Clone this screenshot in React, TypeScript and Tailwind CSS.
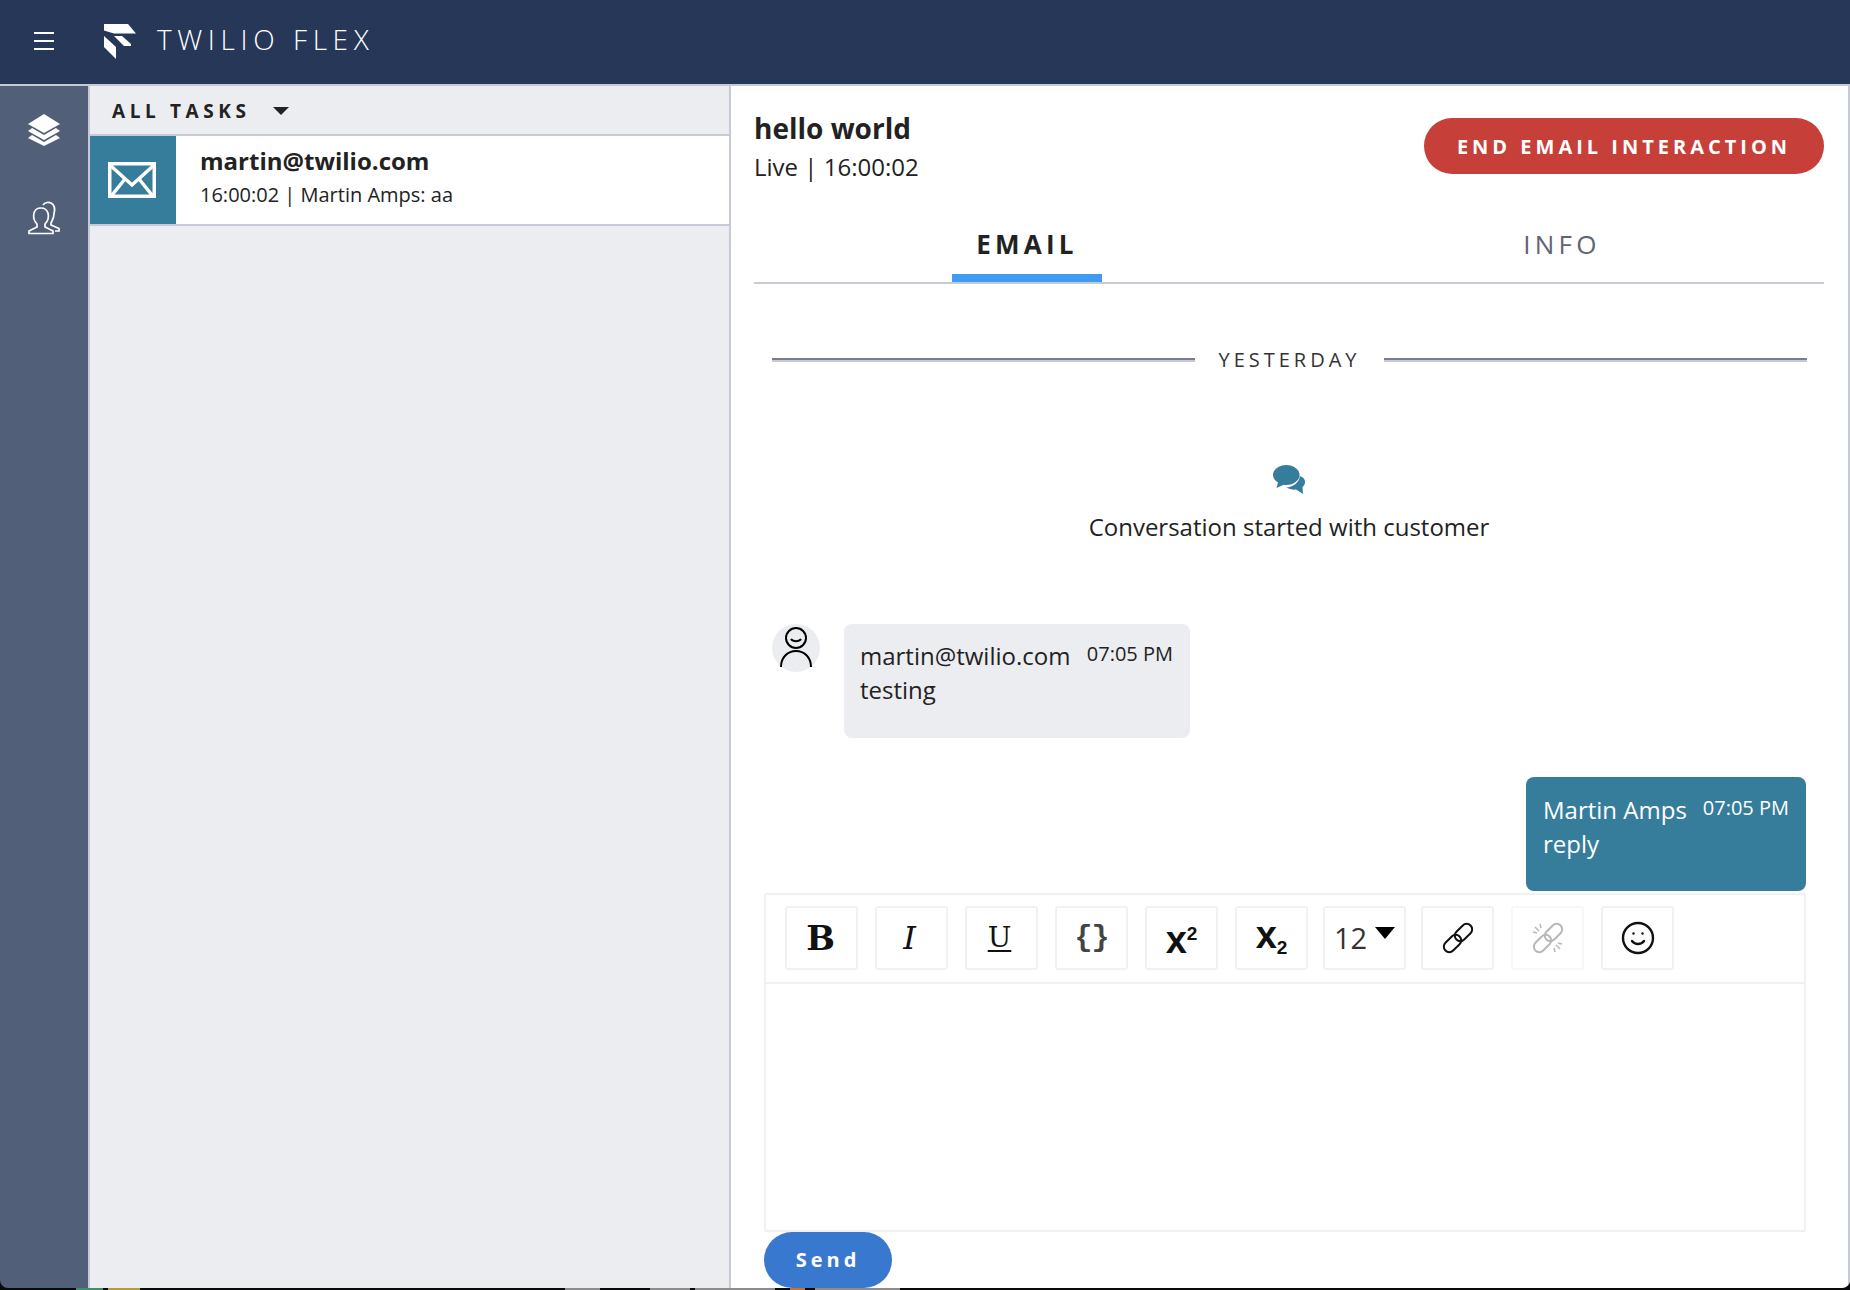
import { Smile } from 'lucide-react';

const font = "font-['Open_Sans',sans-serif]";

const Logo = () => (
    <svg width="32" height="35" viewBox="0 0 32 35" className="shrink-0">
        <path d="M0 0 H24 L32 9.5 H10 L0 6.5 Z" fill="#ffffff" />
        <path d="M10 12 H18 L27 20 V22 H20 Z" fill="#ffffff" />
        <path d="M0 12 L12 23 V35 L0 23 Z" fill="#ffffff" />
    </svg>
);

const LayersIcon = () => (
    <svg width="34" height="34" viewBox="0 0 34 34" fill="#ffffff">
        <path d="M17 1 L33 11 L17 20 L1 11 Z" />
        <path d="M5 15 L17 22 L29 15 L33 18 L17 27 L1 18 Z" />
        <path d="M5 22 L17 29 L29 22 L33 25 L17 33 L1 25 Z" />
    </svg>
);

const UsersIcon = () => (
    <svg width="34" height="34" viewBox="0 0 34 34" fill="none" stroke="#ffffff" strokeWidth="1.7" className="ml-[1px]">
        <path d="M1 32.5 V30 L9 26 V23 C6 20 5 16 6 12 C7 8 11 7 13 7 C16 7 19 9 20 12 C21 16 20 20 17 23 V26 L25 30 V32.5 Z" />
        <path d="M15 4 C17 1 21 1 23 2 C27 4 27 9 26 13 C26 17 24 20 23 22 V24 L31 27.5 V30 H27" />
    </svg>
);

const MailIcon = () => (
    <svg width="48" height="36" viewBox="0 0 48 36" fill="none" stroke="#ffffff" strokeWidth="3.5">
        <rect x="1.75" y="1.75" width="44.5" height="32.5" />
        <path d="M3 4 L24 23 L45 4" />
        <path d="M4 33 L17 17 M44 33 L31 17" />
    </svg>
);

const ChatIcon = () => (
    <svg width="32" height="30" viewBox="0 0 32 30" fill="#367d9c" className="mr-[1px]">
        <path d="M13.3 0 C20.6 0 26.6 4.5 26.6 10 C26.6 15.5 20.6 20 13.3 20 C12.4 20 11.6 19.9 10.8 19.8 L3.5 23 L5 17.6 C2 15.8 0 13 0 10 C0 4.5 6 0 13.3 0 Z" />
        <path d="M27 11 C30 12 32 14 32 17 C32 19 31 21 29.5 22 L30 29 L23 24.5 C20 25 16 24 13 22.5 C20 22 26 18 27 11 Z" />
    </svg>
);

const LinkIcon = ({ muted }: { muted?: boolean }) => (
    <svg width="32" height="32" viewBox="0 0 32 32" fill="none" stroke={muted ? '#b8b8b8' : '#111111'} strokeWidth="2">
        <rect x="0.5" y="16" width="20" height="11" rx="5.5" transform="rotate(-45 10.5 21.5)" />
        <rect x="11.5" y="5" width="20" height="11" rx="5.5" transform="rotate(-45 21.5 10.5)" />
        {muted && <path d="M3 5 L7 9 M8 2 L9 6 M1 10 L5 11 M28 27 L24 23 M23 30 L22 26 M30 22 L26 21" strokeWidth="1.6" />}
    </svg>
);

const ToolButton = ({ children, className }: { children: React.ReactNode; className?: string }) => (
    <div className={`h-[64px] w-[73px] shrink-0 flex items-center justify-center rounded-[3px] border-2 border-[#f1f1f1] ${className ?? ''}`}>
        {children}
    </div>
);

const Toolbar = () => (
    <div className="h-[89px] shrink-0 flex items-start pt-[11px] pl-[19px] gap-[17px] border-b-2 border-[#f1f1f1]">
        <ToolButton className="pr-[2px]">
            <span className="font-['DejaVu_Serif',serif] font-bold text-[34px] text-[#111] leading-none">B</span>
        </ToolButton>
        <ToolButton className="pr-[4px]">
            <span className="font-['DejaVu_Serif',serif] italic text-[32px] text-[#111] leading-none">I</span>
        </ToolButton>
        <ToolButton className="pr-[4px]">
            <span className="font-['DejaVu_Serif',serif] underline underline-offset-[3px] text-[28px] text-[#111] leading-none">U</span>
        </ToolButton>
        <ToolButton>
            <span className="font-['Liberation_Mono',monospace] font-bold text-[30px] text-[#444] leading-none tracking-[-1px]">{'{}'}</span>
        </ToolButton>
        <ToolButton>
            <span className="font-['Liberation_Sans',sans-serif] font-bold text-[38px] text-[#111] leading-none mt-[4px]">
                x<sup className="text-[19px] relative top-[-13px] align-baseline">2</sup>
            </span>
        </ToolButton>
        <ToolButton>
            <span className="font-['Liberation_Sans',sans-serif] font-bold text-[38px] text-[#111] leading-none mt-[-6px]">
                x<sub className="text-[19px] relative top-[6px] align-baseline">2</sub>
            </span>
        </ToolButton>
        <ToolButton className="w-[83px] mx-[-2px] gap-[8px]">
            <span className="text-[29px] text-[#333] leading-none mt-[-2px]">12</span>
            <span className="w-0 h-0 mb-[10px] border-l-[10px] border-r-[10px] border-t-[12px] border-l-transparent border-r-transparent border-t-black" />
        </ToolButton>
        <ToolButton>
            <LinkIcon />
        </ToolButton>
        <ToolButton className="border-[#f8f8f8]">
            <LinkIcon muted />
        </ToolButton>
        <ToolButton>
            <Smile size={36} strokeWidth={1.6} color="#111111" />
        </ToolButton>
    </div>
);

export default function App() {
    return (
        <div className={`${font} h-screen w-full bg-[#0a0a0a] flex flex-col overflow-hidden text-[#222222]`}>
            {/* Top bar */}
            <header className="h-[86px] shrink-0 bg-[#263758] border-b-2 border-[#c6cad7] flex items-center pb-[2px]">
                <div className="w-[88px] flex flex-col items-center gap-[6px]">
                    <span className="w-[20px] h-[2px] bg-white" />
                    <span className="w-[20px] h-[2px] bg-white" />
                    <span className="w-[20px] h-[2px] bg-white" />
                </div>
                <div className="ml-[16px] flex items-center gap-[21px]">
                    <Logo />
                    <span className="text-[28px] font-light tracking-[5.6px] text-white leading-none mt-[-4px]">TWILIO FLEX</span>
                </div>
            </header>

            <div className="flex-1 min-h-0 flex rounded-b-[8px] overflow-hidden">
                {/* Side nav */}
                <nav className="w-[90px] shrink-0 bg-[#525f78] border-r-2 border-[#c6cad7] flex flex-col items-center pt-[27px] gap-[54px]">
                    <LayersIcon />
                    <UsersIcon />
                </nav>

                {/* Task list */}
                <aside className="w-[641px] shrink-0 bg-[#ecedf1] border-r-2 border-[#c6cad7] flex flex-col">
                    <div className="h-[50px] shrink-0 border-b-2 border-[#c6cad7] flex items-center pl-[22px] pt-[2px]">
                        <span className="text-[19px] font-bold tracking-[4.6px] text-[#222] leading-none">ALL TASKS</span>
                        <span className="ml-[22px] w-0 h-0 border-l-[8px] border-r-[8px] border-t-[8px] border-l-transparent border-r-transparent border-t-[#222]" />
                    </div>
                    <div className="h-[90px] shrink-0 bg-white border-b-2 border-[#c6cad7] flex">
                        <div className="w-[86px] bg-[#367d9c] flex items-center justify-center pr-[2px]">
                            <MailIcon />
                        </div>
                        <div className="pl-[24px] pt-[9px]">
                            <div className="text-[24px] font-bold leading-[32px]">martin@twilio.com</div>
                            <div className="text-[20px] leading-[32px] mt-[2px]">16:00:02 | Martin Amps: aa</div>
                        </div>
                    </div>
                </aside>

                {/* Task canvas */}
                <main className="flex-1 min-w-0 bg-white flex flex-col pl-[23px] pr-[24px] border-r-2 border-[#c6cad7]">
                    <div className="h-[90px] shrink-0 flex items-start justify-between pt-[26px]">
                        <div>
                            <div className="text-[28px] font-bold leading-[32px]">hello world</div>
                            <div className="text-[24px] leading-[32px] mt-[7px]">Live | 16:00:02</div>
                        </div>
                        <button className="w-[400px] h-[56px] mt-[6px] rounded-full bg-[#c63f39] text-white text-[20px] font-bold tracking-[4px] pt-[2px]">
                            END EMAIL INTERACTION
                        </button>
                    </div>

                    <div className="h-[108px] shrink-0 flex border-b-2 border-[#c6cad7]">
                        <div className="w-[546px] flex justify-center">
                            <div className="w-[150px] h-[106px] border-b-[8px] border-[#3f9bf3] flex items-start justify-center pt-[50px] text-[26px] leading-[36px] font-bold tracking-[4.2px]">
                                EMAIL
                            </div>
                        </div>
                        <div className="flex-1 flex justify-center pt-[50px] text-[26px] leading-[36px] tracking-[4.2px] text-[#606473]">
                            INFO
                        </div>
                    </div>

                    <div className="flex-1 min-h-0 flex flex-col overflow-hidden">
                        {/* Date divider */}
                        <div className="mt-[63px] px-[18px] mr-[-1px] flex items-center gap-[23px]">
                            <span className="flex-1 h-[4px] border-t-2 border-[#7b7e8a] bg-[#c6cad7]" />
                            <span className="text-[20px] tracking-[4px] leading-[26px] text-[#333]">YESTERDAY</span>
                            <span className="flex-1 h-[4px] border-t-2 border-[#7b7e8a] bg-[#c6cad7]" />
                        </div>

                        <div className="mt-[92px] flex flex-col items-center">
                            <ChatIcon />
                            <div className="mt-[16px] text-[24px] leading-[32px]">Conversation started with customer</div>
                        </div>

                        {/* Messages */}
                        <div className="mt-[81px] pl-[18px] flex items-start gap-[24px]">
                            <div className="w-[48px] h-[48px] rounded-full bg-[#ecedf1] flex items-center justify-center">
                                <svg width="48" height="48" viewBox="0 0 48 48" fill="none" stroke="#000" strokeWidth="2">
                                    <circle cx="24" cy="14" r="10" />
                                    <path d="M19 15 C21 18 27 18 29 15" />
                                    <path d="M9 43 C9 33 16 27 24 27 C32 27 39 33 39 43" />
                                </svg>
                            </div>
                            <div className="w-[346px] h-[114px] rounded-[8px] bg-[#ecedf1] px-[16px] pt-[15px]">
                                <div className="flex items-start justify-between">
                                    <span className="text-[24px] leading-[34px]">martin@twilio.com</span>
                                    <span className="text-[20px] leading-[30px] mr-[1px]">07:05 PM</span>
                                </div>
                                <div className="text-[24px] leading-[34px]">testing</div>
                            </div>
                        </div>

                        <div className="mt-[39px] pr-[18px] flex justify-end">
                            <div className="w-[280px] h-[114px] rounded-[8px] bg-[#367d9c] text-white px-[17px] pt-[16px]">
                                <div className="flex items-start justify-between">
                                    <span className="text-[24px] leading-[34px]">Martin Amps</span>
                                    <span className="text-[20px] leading-[30px]">07:05 PM</span>
                                </div>
                                <div className="text-[24px] leading-[34px]">reply</div>
                            </div>
                        </div>
                    </div>

                    {/* Editor */}
                    <div className="shrink-0 ml-[10px] mr-[18px] h-[339px] border-2 border-[#f1f1f1] rounded-[2px] flex flex-col">
                        <Toolbar />
                    </div>
                    <div className="shrink-0 ml-[10px] h-[56px]">
                        <button className="w-[128px] h-[56px] rounded-full bg-[#3878cf] text-white text-[20px] font-bold tracking-[4px]">
                            Send
                        </button>
                    </div>
                </main>
            </div>

            {/* Sliver of the desktop behind the window */}
            <footer className="h-[2px] shrink-0 flex">
                <span className="ml-[76px] w-[27px] bg-[#3f8f68]" />
                <span className="ml-[5px] w-[32px] bg-[#b89a3a]" />
                <span className="ml-[425px] w-[35px] bg-[#8c8c8c]" />
                <span className="ml-[50px] w-[40px] bg-[#8c8c8c]" />
                <span className="ml-[5px] w-[80px] bg-[#8c8c8c]" />
                <span className="ml-[15px] w-[15px] bg-[#c4742c]" />
                <span className="ml-[10px] w-[85px] bg-[#8c8c8c]" />
            </footer>
        </div>
    );
}
